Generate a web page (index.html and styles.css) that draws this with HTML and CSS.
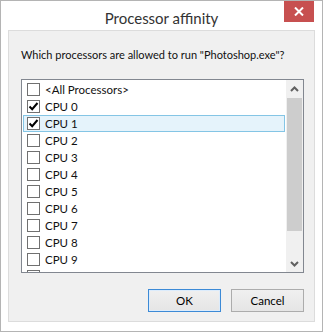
FILE: index.html
```html
<!DOCTYPE html>
<html lang="en">
<head>
<meta charset="UTF-8">
<title>Processor affinity</title>
<link rel="stylesheet" href="styles.css">
</head>
<body>

<div class="window">
  <div class="titlebar">
    <span class="title">Processor affinity</span>
    <button class="close" aria-label="Close">
      <svg width="10" height="9" viewBox="0 0 10 9"><path d="M1 0.5 L9 8.5 M9 0.5 L1 8.5" stroke="#fff" stroke-width="2"/></svg>
    </button>
  </div>

  <div class="client">
    <p class="prompt">Which processors are allowed to run "Photoshop.exe"?</p>

    <div class="listbox">
      <ul class="items">
        <li class="item"><span class="check"></span>&lt;All Processors&gt;</li>
        <li class="item"><span class="check on"><svg width="11" height="11" viewBox="0 0 11 11"><path d="M1.5 5.5 L4.2 8.2 L9.5 2" fill="none" stroke="#000" stroke-width="2"/></svg></span>CPU 0</li>
        <li class="item selected"><span class="check on"><svg width="11" height="11" viewBox="0 0 11 11"><path d="M1.5 5.5 L4.2 8.2 L9.5 2" fill="none" stroke="#000" stroke-width="2"/></svg></span>CPU 1</li>
        <li class="item"><span class="check"></span>CPU 2</li>
        <li class="item"><span class="check"></span>CPU 3</li>
        <li class="item"><span class="check"></span>CPU 4</li>
        <li class="item"><span class="check"></span>CPU 5</li>
        <li class="item"><span class="check"></span>CPU 6</li>
        <li class="item"><span class="check"></span>CPU 7</li>
        <li class="item"><span class="check"></span>CPU 8</li>
        <li class="item"><span class="check"></span>CPU 9</li>
        <li class="item partial"><span class="check"></span></li>
      </ul>
      <div class="scrollbar">
        <span class="arrow">
          <svg width="9" height="6" viewBox="0 0 9 6"><path d="M1 5 L4.5 1.5 L8 5" fill="none" stroke="#606060" stroke-width="2"/></svg>
        </span>
        <div class="track"><div class="thumb"></div></div>
        <span class="arrow">
          <svg width="9" height="6" viewBox="0 0 9 6"><path d="M1 1 L4.5 4.5 L8 1" fill="none" stroke="#606060" stroke-width="2"/></svg>
        </span>
      </div>
    </div>

    <div class="buttons">
      <button class="btn default">OK</button>
      <button class="btn">Cancel</button>
    </div>
  </div>
</div>

</body>
</html>
```

FILE: styles.css
```css
body {
  margin: 0;
  font-family: Lato, "Open Sans", sans-serif;
  font-size: 11px;
  color: #111;
  background: #fff;
}
.window {
  width: 323px;
  height: 332px;
  box-sizing: border-box;
  border: 1px solid #b4b4b4;
  background: #fff;
  display: flex;
  flex-direction: column;
}
.titlebar {
  height: 29px;
  display: grid;
  grid-template-columns: 1fr auto 1fr;
}
.title {
  grid-column: 2;
  font-size: 15px;
  line-height: 21px;
  padding-top: 7px;
  color: #333;
}
.close {
  grid-column: 3;
  justify-self: end;
  align-self: start;
  width: 30px;
  height: 21px;
  margin-right: 8px;
  border: none;
  padding: 0;
  background: #c75050;
  display: flex;
  align-items: center;
  justify-content: center;
}
.client {
  margin: 0 7px 9px;
  height: 292px;
  box-sizing: border-box;
  border: 1px solid #dcdcdc;
  background: #f0f0f0;
  padding: 16px 10px 0 12px;
}
.prompt {
  margin: 0;
  font-size: 11px;
  line-height: 16px;
  white-space: nowrap;
}
.listbox {
  margin-top: 16px;
  height: 194px;
  box-sizing: border-box;
  border: 1px solid #828790;
  background: #fff;
  display: flex;
}
.items {
  flex: 1;
  list-style: none;
  margin: 0;
  padding: 1px 1px 0 1px;
  overflow: hidden;
  font-size: 11.5px;
}
.item {
  height: 17px;
  box-sizing: border-box;
  border: 1px solid transparent;
  padding-left: 3px;
  display: flex;
  align-items: center;
  gap: 5px;
  white-space: nowrap;
}
.item.selected {
  background: #e5f3fb;
  border-color: #84c5e5;
}
.item.partial {
  align-items: flex-start;
  padding-top: 1px;
}
.check {
  width: 13px;
  height: 13px;
  box-sizing: border-box;
  border: 1px solid #707070;
  background: #fff;
  flex-shrink: 0;
  display: flex;
  align-items: center;
  justify-content: center;
}
.scrollbar {
  width: 17px;
  background: #f0f0f0;
  display: flex;
  flex-direction: column;
}
.arrow {
  height: 17px;
  display: flex;
  align-items: center;
  justify-content: center;
}
.track {
  flex: 1;
  padding: 1px 1px 0;
}
.thumb {
  height: 133px;
  background: #cdcdcd;
}
.buttons {
  margin-top: 16px;
  display: flex;
  justify-content: flex-end;
  gap: 10px;
}
.btn {
  width: 73px;
  height: 23px;
  font-family: inherit;
  font-size: 11.5px;
  color: #000;
  border: 1px solid #acacac;
  background: linear-gradient(#f0f0f0, #e5e5e5);
  padding: 0;
}
.btn.default {
  border-color: #3c8ad6;
  box-shadow: inset 0 0 0 1px #dcecfc;
}
```
